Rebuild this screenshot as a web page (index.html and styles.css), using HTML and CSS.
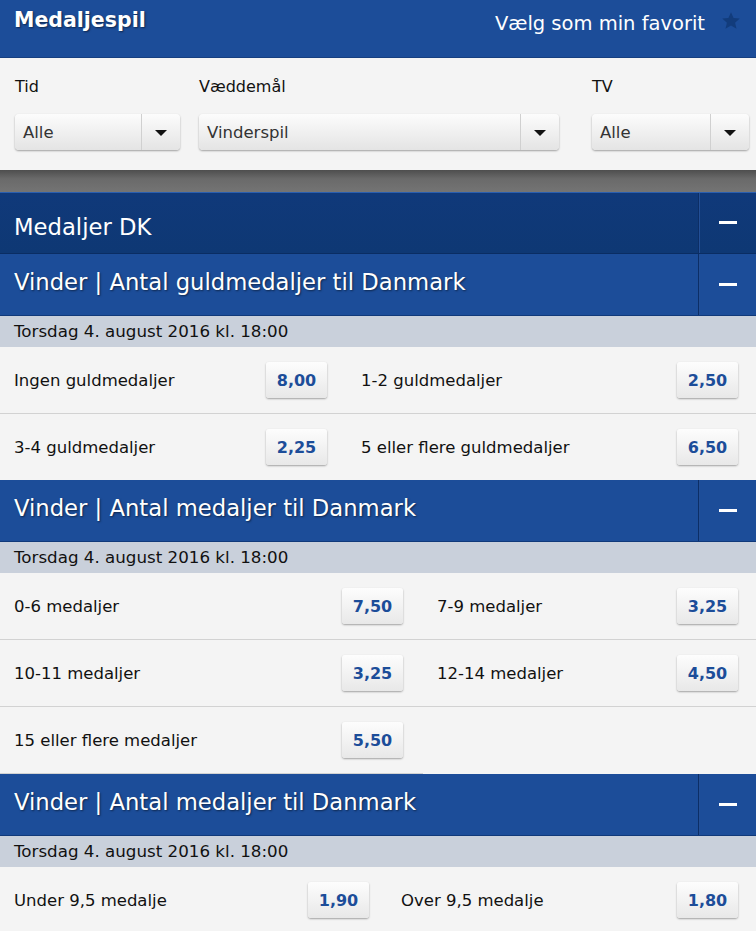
FILE: index.html
```html
<!DOCTYPE html>
<html lang="da">
<head>
    <meta charset="UTF-8">
    <meta name="viewport" content="width=device-width, initial-scale=1.0">
    <title>Medaljespil</title>
    <link rel="stylesheet" href="styles.css">
</head>
<body>
    <div class="top-bar">
        <h1>Medaljespil</h1>
        <div class="favorite">
            <span>Vælg som min favorit</span>
            <svg class="star" width="20" height="20" viewBox="0 0 24 24"><path d="M12 1.5l3.1 7 7.4.6-5.6 4.9 1.7 7.4L12 17.5l-6.6 3.9 1.7-7.4L1.5 9.1l7.4-.6z"/></svg>
        </div>
    </div>

    <!-- Filters -->
    <div class="filters">
        <div class="filter filter-time">
            <label>Tid</label>
            <div class="select"><span>Alle</span><div class="select-arrow"></div></div>
        </div>
        <div class="filter filter-bet">
            <label>Væddemål</label>
            <div class="select"><span>Vinderspil</span><div class="select-arrow"></div></div>
        </div>
        <div class="filter filter-tv">
            <label>TV</label>
            <div class="select"><span>Alle</span><div class="select-arrow"></div></div>
        </div>
    </div>

    <div class="divider-band"></div>

    <div class="group-header">
        <div class="header-title">Medaljer DK</div>
        <div class="header-toggle"><span class="minus"></span></div>
    </div>

    <!-- Guldmedaljer -->
    <div class="market-header">
        <div class="header-title">Vinder | Antal guldmedaljer til Danmark</div>
        <div class="header-toggle"><span class="minus"></span></div>
    </div>
    <div class="date-bar">Torsdag 4. august 2016 kl. 18:00</div>
    <div class="outcomes outcomes-gold">
        <div class="outcome col-left"><span>Ingen guldmedaljer</span><button class="odds">8,00</button></div>
        <div class="outcome col-right"><span>1-2 guldmedaljer</span><button class="odds">2,50</button></div>
        <div class="outcome col-left"><span>3-4 guldmedaljer</span><button class="odds">2,25</button></div>
        <div class="outcome col-right"><span>5 eller flere guldmedaljer</span><button class="odds">6,50</button></div>
    </div>

    <!-- Medaljer -->
    <div class="market-header">
        <div class="header-title">Vinder | Antal medaljer til Danmark</div>
        <div class="header-toggle"><span class="minus"></span></div>
    </div>
    <div class="date-bar">Torsdag 4. august 2016 kl. 18:00</div>
    <div class="outcomes outcomes-total">
        <div class="outcome col-left"><span>0-6 medaljer</span><button class="odds">7,50</button></div>
        <div class="outcome col-right"><span>7-9 medaljer</span><button class="odds">3,25</button></div>
        <div class="outcome col-left"><span>10-11 medaljer</span><button class="odds">3,25</button></div>
        <div class="outcome col-right"><span>12-14 medaljer</span><button class="odds">4,50</button></div>
        <div class="outcome col-left"><span>15 eller flere medaljer</span><button class="odds">5,50</button></div>
        <div class="outcome col-right empty"></div>
    </div>

    <!-- Over/under -->
    <div class="market-header">
        <div class="header-title">Vinder | Antal medaljer til Danmark</div>
        <div class="header-toggle"><span class="minus"></span></div>
    </div>
    <div class="date-bar">Torsdag 4. august 2016 kl. 18:00</div>
    <div class="outcomes outcomes-ou">
        <div class="outcome col-left"><span>Under 9,5 medalje</span><button class="odds">1,90</button></div>
        <div class="outcome col-right"><span>Over 9,5 medalje</span><button class="odds">1,80</button></div>
    </div>
</body>
</html>
```

FILE: styles.css
```css
body {
    margin: 0;
    font-family: Tahoma, "DejaVu Sans", sans-serif;
    background-color: #f4f4f4;
    color: #111;
}
.top-bar {
    background-color: #1c4d99;
    height: 57px;
    display: flex;
    justify-content: space-between;
    align-items: flex-start;
    padding: 0 0 0 14px;
    border-bottom: 1px solid #163f80;
}
.top-bar h1 {
    margin: 8px 0 0;
    font-size: 20.5px;
    font-weight: bold;
    color: white;
    text-shadow: 1px 1px 2px rgba(0, 0, 0, 0.5);
}
.favorite {
    display: flex;
    align-items: center;
    margin-top: 12px;
    color: white;
    font-size: 19.5px;
}
.star {
    fill: #123c7c;
    margin: -6px 15px 0 16px;
}
.filters {
    display: flex;
    padding: 18px 7px 20px 15px;
    background-color: #f4f4f4;
}
.filter label {
    display: block;
    font-size: 16px;
    line-height: 21px;
    color: #111;
    margin: 0 0 17px 0;
}
.filter-time { width: 165px; margin-right: 19px; }
.filter-bet { width: 360px; margin-right: 33px; }
.filter-tv { width: 157px; }
.select {
    height: 36px;
    border-radius: 4px;
    background: linear-gradient(#fcfcfc, #e4e4e4);
    box-shadow: 0 1px 2px rgba(0, 0, 0, 0.35);
    display: flex;
    align-items: center;
    font-size: 16.5px;
    color: #333;
}
.select span {
    flex-grow: 1;
    padding-left: 8px;
}
.select-arrow {
    width: 38px;
    height: 36px;
    border-left: 1px solid #d0d0d0;
    position: relative;
}
.select-arrow::after {
    content: '';
    position: absolute;
    top: 16px;
    left: 13px;
    border-left: 6px solid transparent;
    border-right: 6px solid transparent;
    border-top: 6px solid #111;
}
.divider-band {
    height: 22px;
    background: linear-gradient(#4e4e4e, #6a6a6a 40%, #747474);
}
.group-header,
.market-header {
    display: flex;
    color: white;
}
.group-header {
    height: 60px;
    background: linear-gradient(#10397a, #0e3874);
    border-top: 1px solid #2a5fb0;
    border-bottom: 1px solid #0a2d63;
}
.market-header {
    height: 61px;
    background-color: #1c4d99;
    border-bottom: 1px solid #10397a;
}
.header-title {
    flex-grow: 1;
    font-size: 22.7px;
    padding-left: 14px;
    display: flex;
    align-items: center;
}
.market-header .header-title {
    text-shadow: 1px 1px 2px rgba(0, 0, 0, 0.5);
    padding-bottom: 5px;
}
.group-header .header-title {
    padding-top: 8px;
}
.header-toggle {
    width: 57px;
    border-left: 1px solid #0c2e66;
    box-shadow: inset 1px 0 0 #234f96;
    display: flex;
    align-items: center;
    justify-content: center;
}
.group-header .header-toggle {
    padding-bottom: 2px;
}
.minus {
    width: 18px;
    height: 3px;
    background: white;
}
.date-bar {
    background-color: #c9d0db;
    height: 31px;
    font-size: 16.7px;
    line-height: 31px;
    padding-left: 14px;
    color: #111;
}
.outcomes {
    display: grid;
}
.outcomes-gold { grid-template-columns: 347px 1fr; }
.outcomes-total { grid-template-columns: 423px 1fr; }
.outcomes-ou { grid-template-columns: 389px 1fr; }
.outcome {
    height: 66px;
    display: flex;
    align-items: center;
    justify-content: space-between;
    border-bottom: 1px solid #d2d2d2;
    font-size: 16.5px;
}
.outcome:nth-last-child(-n+2) {
    border-bottom: none;
}
.outcomes-total .outcome:nth-last-child(-n+2) {
    border-bottom: 1px solid #d2d2d2;
}
.outcomes-total .empty {
    border-bottom-color: transparent !important;
}
.col-left { padding: 0 20px 0 14px; }
.col-right { padding: 0 18px 0 14px; }
.outcomes-ou .col-right { padding-left: 12px; }
.odds {
    width: 61px;
    height: 36px;
    border: none;
    border-radius: 3px;
    background: linear-gradient(#fdfdfd, #e8e8e8);
    box-shadow: 0 1px 2px rgba(0, 0, 0, 0.35);
    font-family: inherit;
    font-size: 16px;
    font-weight: bold;
    color: #1c4d99;
    cursor: pointer;
}
```
